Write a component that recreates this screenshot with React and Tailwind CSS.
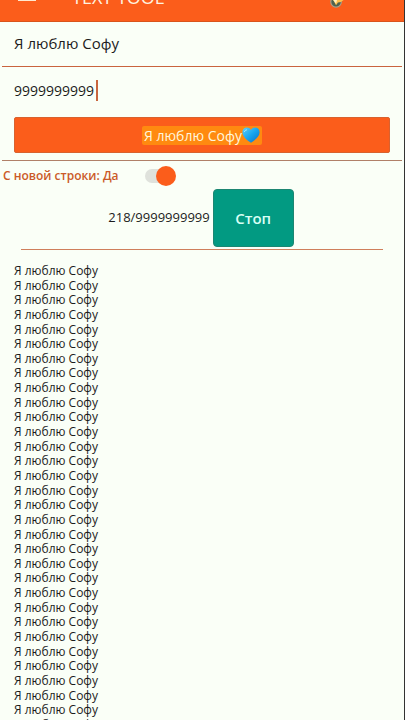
import React, { useState } from 'react';

const PHRASE = 'Я люблю Софу';
const VISIBLE_LINES = 32;

const HeartIcon = () => (
  <svg viewBox="0 0 18 16" className="h-4 w-[18px] shrink-0" aria-hidden="true">
    <defs>
      <linearGradient id="heart" x1="0" y1="0" x2="1" y2="1">
        <stop offset="0" stopColor="#5fd0fa" />
        <stop offset="0.5" stopColor="#18a5ee" />
        <stop offset="1" stopColor="#0b6fc4" />
      </linearGradient>
    </defs>
    <path
      d="M9 15.800C5 13 .4 9.600.4 5.200.4 2.400 2.300.5 4.900.5 6.600.5 8.200 1.300 9 3 9.800 1.300 11.400.5 13.100.5c2.600 0 4.500 1.900 4.500 4.700 0 4.400-4.600 7.800-8.600 10.600z"
      fill="url(#heart)"
    />
    <path d="M2.500 4.600c.3-1 1-1.600 2-1.700" stroke="#b5ecff" strokeWidth="1" strokeLinecap="round" fill="none" />
  </svg>
);

const Header = () => (
  <header className="flex h-[22px] items-end overflow-hidden border-b border-[#d9541b] bg-[#fb5d1b] text-[#fff3e0]">
    <button type="button" aria-label="Меню" className="ml-[18px] flex h-full w-[18px] items-start">
      <span className="block h-px w-full bg-[#ffe9cf]" />
    </button>
    <h1 className="ml-9 flex-1 pb-[14px] text-[18px] leading-[20px] font-medium whitespace-nowrap">TEXT TOOL</h1>
    <button type="button" aria-label="Премиум" className="mr-[59px] h-full w-4">
      <svg viewBox="0 0 16 22" className="h-full w-4">
        <circle cx="7" cy="2" r="5.500" fill="#4d6350" stroke="#a9a08c" strokeWidth="1.200" />
        <path d="M4 0h11l-3 2-3 .5-2 3z" fill="#ffc04a" />
        <path d="M4 0h4L7 4z" fill="#fff0c0" />
      </svg>
    </button>
  </header>
);

const App = () => {
  const [text, setText] = useState(PHRASE);
  const [count, setCount] = useState('9999999999');
  const [newLine, setNewLine] = useState(true);

  return (
    <div className="flex h-screen flex-col overflow-hidden border-r border-[#333333] bg-[#fafff7] font-['Open_Sans','Noto_Sans',sans-serif] text-[#1c1c1c]">
      <Header />

      <div className="mx-0.5 border-b border-[#c9643f] px-3">
        <input
          aria-label="Текст"
          value={text}
          onChange={(e) => setText(e.target.value)}
          className="block h-11 w-full bg-transparent pb-0.5 text-[15px] outline-none"
        />
      </div>

      <div className="mx-0.5 border-b border-[#b08068] px-3 pb-[7px]">
        <div className="flex h-[50px] items-center pb-1">
          <input
            aria-label="Количество"
            value={count}
            onChange={(e) => setCount(e.target.value)}
            className="h-6 w-[82px] bg-transparent text-[14px] outline-none"
          />
          <span className="h-[21px] w-0.5 bg-[#c9663f]" />
        </div>
        <button
          type="button"
          className="flex h-9 w-full items-center justify-center rounded-xs border border-[#d8622f] bg-[#fb5d1b] text-[14px] text-[#fff6dc]"
        >
          <span className="flex h-[19px] items-center rounded-xs bg-[#ff8a10] px-0.5">
            {PHRASE}
            <HeartIcon />
          </span>
        </button>
      </div>

      <div className="flex h-7 items-center gap-[26px] pt-0.5 pl-[3px]">
        <label htmlFor="new-line" className="text-[12px] font-semibold text-[#cb5a28]">
          С новой строки: {newLine ? 'Да' : 'Нет'}
        </label>
        <span className="relative flex h-5 w-[31px] items-center">
          <input
            id="new-line"
            type="checkbox"
            role="switch"
            checked={newLine}
            onChange={(e) => setNewLine(e.target.checked)}
            className="peer h-[14px] w-[28px] appearance-none rounded-full bg-[#dfe2dc]"
          />
          <span className="pointer-events-none absolute left-0 size-5 rounded-full bg-[#fb5d1b] peer-checked:right-0 peer-checked:left-auto" />
        </span>
      </div>

      <div className="mx-[21px] flex items-center justify-center gap-[3px] border-b border-[#cf7f5c] pr-0.5 pb-0.5">
        <output className="text-[13px]">218/9999999999</output>
        <button type="button" className="h-[58px] w-[81px] rounded-sm border border-[#1c8672] bg-[#029a82] text-[15px] font-semibold text-[#d8fff5]">
          Стоп
        </button>
      </div>

      <ul className="-mb-3 flex flex-1 flex-col justify-between pt-[14px] pl-[14px] text-[12px] leading-[14px]">
        {Array.from({ length: VISIBLE_LINES }, (_, i) => (
          <li key={i}>{PHRASE}</li>
        ))}
      </ul>
    </div>
  );
};

export default App;
